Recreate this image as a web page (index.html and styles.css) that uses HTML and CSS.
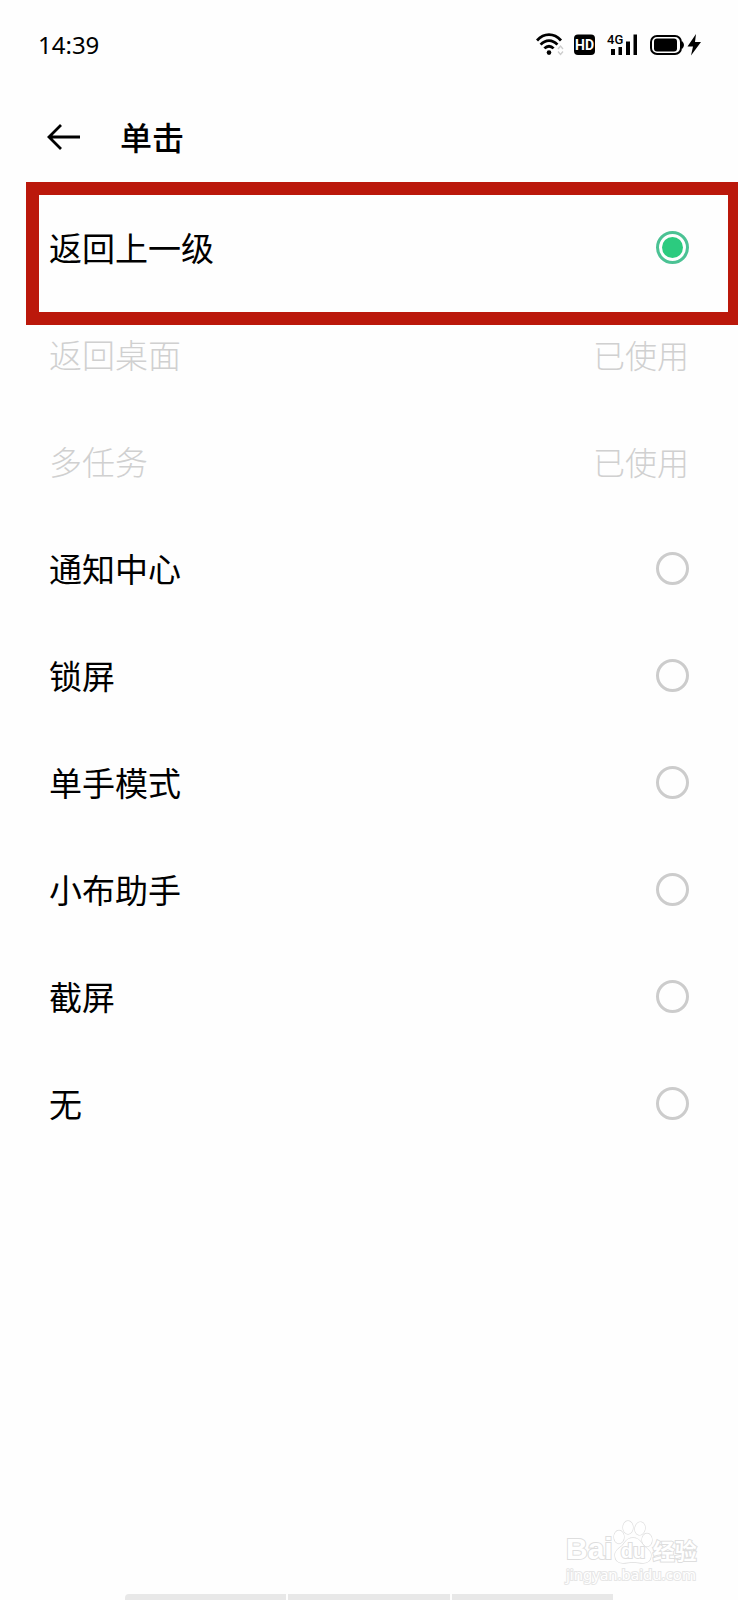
FILE: index.html
```html
<!DOCTYPE html>
<html lang="zh-CN">

<head>
    <meta charset="UTF-8">
    <meta name="viewport" content="width=device-width, initial-scale=1">
    <title>单击</title>
    <link rel="stylesheet" href="styles.css">
</head>

<body>
    <div class="statusbar">
        <span class="time">14:39</span>
        <svg class="status-icons" width="168" height="24" viewBox="0 0 168 24">
            <!-- wifi -->
            <g fill="none" stroke="#000" stroke-width="2.8">
                <path d="M1 7.5C8-.3 18-.3 25 7.5" />
                <path d="M4.6 11.6c5-5.4 11.8-5.4 16.8 0" />
                <path d="M8.4 15.4c2.8-2.9 6.4-2.9 9.2 0" />
            </g>
            <circle cx="13" cy="19.6" r="2.3" />
            <path d="M22 16l2.5-3 2.5 3M22 18.5l2.5 3 2.5-3" fill="none" stroke="#ccc" stroke-width="1.3" />
            <!-- HD -->
            <rect x="38" y="1.5" width="21" height="20.5" rx="4" />
            <text class="hd" x="48.5" y="17" text-anchor="middle">HD</text>
            <!-- 4G -->
            <text class="net" x="71" y="11">4G</text>
            <path d="M75 16h4v6h-4zM82.5 14h3.5v8h-3.5zM90 8.5h4v13.5h-4zM97.5 1.5h3.5v20.5h-3.5z" />
            <!-- battery -->
            <rect x="115" y="3" width="30" height="18" rx="6" fill="none" stroke="#000" stroke-width="2" />
            <rect x="118" y="5.5" width="23" height="13" rx="3" />
            <path d="M146 8q4 4 0 8z" />
            <path d="M160 1l-8.5 12.5h5.5l-2 9 10-13.5h-6z" />
        </svg>
    </div>

    <header class="header">
        <a class="back" href="#" aria-label="返回">
            <svg width="34" height="28" viewBox="0 0 34 28">
                <path d="M33 14H2M14 2L2 14l12 12" fill="none" stroke="#000" stroke-width="2.8" />
            </svg>
        </a>
        <h1>单击</h1>
    </header>

    <form class="options">
        <label class="row marked">
            <span>返回上一级</span>
            <input type="radio" name="action" checked>
        </label>
        <div class="row used">
            <span>返回桌面</span>
            <span class="state">已使用</span>
        </div>
        <div class="row used">
            <span>多任务</span>
            <span class="state">已使用</span>
        </div>
        <label class="row">
            <span>通知中心</span>
            <input type="radio" name="action">
        </label>
        <label class="row">
            <span>锁屏</span>
            <input type="radio" name="action">
        </label>
        <label class="row">
            <span>单手模式</span>
            <input type="radio" name="action">
        </label>
        <label class="row">
            <span>小布助手</span>
            <input type="radio" name="action">
        </label>
        <label class="row">
            <span>截屏</span>
            <input type="radio" name="action">
        </label>
        <label class="row">
            <span>无</span>
            <input type="radio" name="action">
        </label>
    </form>

    <footer class="footer">
        <div class="watermark">
            <div class="brand">
                <span class="bai">Bai</span>
                <svg width="40" height="44" viewBox="0 0 40 44">
                    <g fill="#fff" stroke="#dedede" stroke-width="1.3">
                        <ellipse cx="6" cy="17" rx="5" ry="6.5" />
                        <ellipse cx="15" cy="7.5" rx="5" ry="6.5" />
                        <ellipse cx="27" cy="8.5" rx="5" ry="6.5" transform="rotate(12 27 8.5)" />
                        <ellipse cx="34" cy="20" rx="5" ry="6.5" />
                        <path d="M20 18c-7 0-8 5-11 8-3 2-7 5-7 9 0 5 3 8 8 8 4 0 6-1 10-1s6 1 10 1c5 0 8-3 8-8 0-4-4-6-7-9-3-3-4-8-11-8z" />
                    </g>
                    <text class="du" x="20" y="38" text-anchor="middle">du</text>
                </svg>
                <span class="jingyan">经验</span>
            </div>
            <div class="url">jingyan.baidu.com</div>
        </div>
        <div class="navbar">
            <i></i><i></i><i></i>
        </div>
    </footer>
</body>

</html>
```
FILE: styles.css
```css
* {
    box-sizing: border-box;
}

body {
    margin: 0;
    min-height: 100vh;
    display: flex;
    flex-direction: column;
    background-color: #fefefe;
    color: #000;
    font-family: "Noto Sans CJK SC", sans-serif;
    overflow-x: hidden;
}

.statusbar {
    display: flex;
    justify-content: space-between;
    align-items: center;
    height: 90px;
    padding: 0 34px 0 38px;
}

.time {
    padding-bottom: 2px;
    font-family: "Noto Sans", sans-serif;
    font-size: 24px;
}

.hd {
    font: bold 14px Roboto, sans-serif;
    fill: #fff;
}

.net {
    font: 500 13px Roboto, sans-serif;
}

.header {
    display: flex;
    align-items: center;
    gap: 39px;
    height: 94px;
    padding: 0 47px;
}

.back {
    display: flex;
}

h1 {
    margin: 0;
    padding-bottom: 2px;
    font-size: 32px;
    font-weight: 500;
    line-height: 48px;
}

.options {
    margin-top: 10px;
}

.row {
    position: relative;
    display: flex;
    justify-content: space-between;
    align-items: center;
    height: 107px;
    padding: 0 49px;
    font-size: 33px;
    line-height: 48px;
}

.row span {
    padding-bottom: 2px;
}

/* red frame around the selected option */
.marked::after {
    content: "";
    position: absolute;
    top: -12px;
    bottom: -24px;
    left: 26px;
    right: 0;
    border: 13px solid #bb180b;
    border-right-width: 10px;
    pointer-events: none;
}

.used {
    color: #d0d0d0;
    font-weight: 300;
}

.state {
    font-size: 32px;
}

input[type="radio"] {
    appearance: none;
    width: 33px;
    height: 33px;
    margin: 0;
    border: 3px solid #ccc;
    border-radius: 50%;
}

input[type="radio"]:checked {
    border-color: #4bc294;
    padding: 3px;
    background: #2ccb7f content-box;
}

.footer {
    margin-top: auto;
}

.watermark {
    width: 132px;
    margin: 0 40px 10px auto;
    color: #fff;
    white-space: nowrap;
    -webkit-text-stroke: 2px #dedede;
    paint-order: stroke fill;
}

.brand {
    display: flex;
    align-items: flex-end;
    height: 44px;
}

.brand svg {
    flex: none;
}

.bai {
    font: bold 30px/30px "Liberation Sans", sans-serif;
}

.du {
    font: bold 20px "Liberation Sans", sans-serif;
    fill: #fff;
    stroke: #dedede;
    stroke-width: 2px;
}

.jingyan {
    font-size: 22px;
    font-weight: 700;
    line-height: 30px;
}

.url {
    font: 15px/20px "Noto Sans", sans-serif;
    -webkit-text-stroke-color: #e6e6e6;
}

.navbar {
    display: flex;
    gap: 2px;
    height: 6px;
    padding: 0 17%;
}

.navbar i {
    flex: 1;
    background-color: #e8e8e8;
}

.navbar i:first-child {
    border-top-left-radius: 4px;
}
```
